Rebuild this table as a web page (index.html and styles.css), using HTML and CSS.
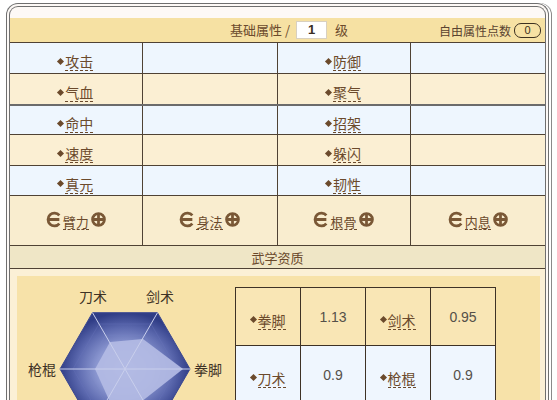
FILE: index.html
```html
<!DOCTYPE html>
<html>
<head>
<meta charset="utf-8">
<link rel="stylesheet" href="styles.css">
</head>
<body>
<div class="frame">
  <div class="topstrip"></div>
  <div class="head">
    <span class="head-title">基础属性 /</span>
    <span class="lvl">1</span>
    <span class="head-title">级</span>
    <span class="free">自由属性点数 <span class="pill">0</span></span>
  </div>
  <table class="attr">
    <colgroup><col class="c1"><col class="c2"><col class="c3"><col class="c4"></colgroup>
    <tr class="blue"><td><span class="lab"><i></i><u>攻击</u></span></td><td></td><td><span class="lab"><i></i><u>防御</u></span></td><td></td></tr>
    <tr class="cream"><td><span class="lab"><i></i><u>气血</u></span></td><td></td><td><span class="lab"><i></i><u>聚气</u></span></td><td></td></tr>
    <tr class="blue thick"><td><span class="lab"><i></i><u>命中</u></span></td><td></td><td><span class="lab"><i></i><u>招架</u></span></td><td></td></tr>
    <tr class="cream"><td><span class="lab"><i></i><u>速度</u></span></td><td></td><td><span class="lab"><i></i><u>躲闪</u></span></td><td></td></tr>
    <tr class="blue short"><td><span class="lab"><i></i><u>真元</u></span></td><td></td><td><span class="lab"><i></i><u>韧性</u></span></td><td></td></tr>
    <tr class="stat">
      <td><span class="ctl"><svg class="ic" viewBox="0 0 16 16"><path d="M13.5 4.2A6 6 0 1 0 13.5 11.8M2.4 8H13.5"/></svg><u>臂力</u><svg class="ic" viewBox="0 0 16 16"><circle cx="8" cy="8" r="5.6"/><path d="M2.4 8H13.6M8 2.4V13.6"/></svg></span></td>
      <td><span class="ctl"><svg class="ic" viewBox="0 0 16 16"><path d="M13.5 4.2A6 6 0 1 0 13.5 11.8M2.4 8H13.5"/></svg><u>身法</u><svg class="ic" viewBox="0 0 16 16"><circle cx="8" cy="8" r="5.6"/><path d="M2.4 8H13.6M8 2.4V13.6"/></svg></span></td>
      <td><span class="ctl"><svg class="ic" viewBox="0 0 16 16"><path d="M13.5 4.2A6 6 0 1 0 13.5 11.8M2.4 8H13.5"/></svg><u>根骨</u><svg class="ic" viewBox="0 0 16 16"><circle cx="8" cy="8" r="5.6"/><path d="M2.4 8H13.6M8 2.4V13.6"/></svg></span></td>
      <td><span class="ctl"><svg class="ic" viewBox="0 0 16 16"><path d="M13.5 4.2A6 6 0 1 0 13.5 11.8M2.4 8H13.5"/></svg><u>内息</u><svg class="ic" viewBox="0 0 16 16"><circle cx="8" cy="8" r="5.6"/><path d="M2.4 8H13.6M8 2.4V13.6"/></svg></span></td>
    </tr>
    <tr class="sub"><td colspan="4">武学资质</td></tr>
  </table>
  <div class="panel">
    <div class="panel-in">
      <svg class="radar" width="218" height="130" viewBox="0 0 218 130">
        <defs>
          <radialGradient id="rg" cx="50%" cy="50%" r="50%">
            <stop offset="0" stop-color="#aeb7e2"/>
            <stop offset="0.45" stop-color="#8995cf"/>
            <stop offset="0.75" stop-color="#5a67ad"/>
            <stop offset="1" stop-color="#303d86"/>
          </radialGradient>
        </defs>
        <polygon points="173,93 140.5,36.7 75.5,36.7 43,93 75.5,149.3 140.5,149.3" fill="url(#rg)" stroke="#3a4790" stroke-width="1"/>
        <polygon points="160,93 134,48 82,48 56,93 82,138 134,138" fill="none" stroke="#6774b8" stroke-width="0.6" opacity="0.6"/>
        <polygon points="147,93 127.5,59.2 88.5,59.2 69,93 88.5,126.8 127.5,126.8" fill="none" stroke="#7a86c4" stroke-width="0.6" opacity="0.5"/>
        <polygon points="166,93 126,63 93,66 78,93 92,124 124,126" fill="#b3bbe4" fill-opacity="0.92"/>
        <g stroke="#c9cfec" stroke-width="1">
          <line x1="108" y1="93" x2="173" y2="93"/>
          <line x1="108" y1="93" x2="43" y2="93"/>
          <line x1="108" y1="93" x2="140.5" y2="36.7"/>
          <line x1="108" y1="93" x2="75.5" y2="36.7"/>
          <line x1="108" y1="93" x2="75.5" y2="149.3"/>
          <line x1="108" y1="93" x2="140.5" y2="149.3"/>
        </g>
        <g class="rl">
          <text x="76" y="26" text-anchor="middle">刀术</text>
          <text x="143" y="26" text-anchor="middle">剑术</text>
          <text x="25" y="99" text-anchor="middle">枪棍</text>
          <text x="191" y="99" text-anchor="middle">拳脚</text>
        </g>
      </svg>
      <table class="apt">
        <tr class="ylw"><td><span class="lab"><i></i><u>拳脚</u></span></td><td class="num">1.13</td><td><span class="lab"><i></i><u>剑术</u></span></td><td class="num">0.95</td></tr>
        <tr class="blue"><td><span class="lab"><i></i><u>刀术</u></span></td><td class="num">0.9</td><td><span class="lab"><i></i><u>枪棍</u></span></td><td class="num">0.9</td></tr>
      </table>
    </div>
  </div>
</div>
</body>
</html>
```
FILE: styles.css
```css
html, body {
  margin: 0;
  padding: 0;
  background: #ffffff;
  overflow: hidden;
}
body {
  font-family: "Noto Sans CJK SC", "Liberation Sans", sans-serif;
  color: #6b4a2c;
}
.frame {
  margin: 3px 0 0 6px;
  border: 4px double #6f6f6f;
  border-bottom: none;
  border-radius: 12px 12px 0 0;
  background: #fdf9f6;
  width: 543px;
  height: 397px;
  box-sizing: border-box;
  overflow: hidden;
  box-shadow: 2px 0 0 #ffffff, 3px 0 0 #8a8a8a;
}
.topstrip {
  height: 11px;
}
.head {
  height: 24px;
  background: #f6e1a3;
  display: flex;
  align-items: center;
  padding-left: 220px;
  padding-right: 4px;
  border-bottom: 1px solid #4f4234;
  font-size: 13px;
  color: #6b4a2c;
}
.head-title {
  line-height: 18px;
}
.lvl {
  display: inline-block;
  width: 31px;
  height: 18px;
  margin: 0 8px 0 6px;
  background: #ffffff;
  border: 1px solid #d8d0c0;
  box-sizing: border-box;
  text-align: center;
  font-family: "Liberation Sans", sans-serif;
  font-weight: bold;
  font-size: 13px;
  line-height: 16px;
  color: #3a2e22;
}
.free {
  margin-left: auto;
  font-size: 12px;
  display: flex;
  align-items: center;
  gap: 3px;
  color: #5a4330;
}
.pill {
  display: inline-block;
  width: 27px;
  height: 15px;
  border: 1.5px solid #3c3020;
  border-radius: 7px;
  box-sizing: border-box;
  text-align: center;
  font-family: "Liberation Sans", sans-serif;
  font-size: 11px;
  line-height: 12px;
  color: #3c3020;
}
.attr {
  width: 535px;
  border-collapse: collapse;
  table-layout: fixed;
}
.c1 { width: 132px; }
.c2 { width: 135px; }
.c3 { width: 133px; }
.c4 { width: 135px; }
.attr td {
  border: 1px solid #4f4234;
  height: 30px;
  padding: 0;
  text-align: center;
  vertical-align: middle;
}
.attr tr:first-child td { border-top: none; }
.attr td:first-child { border-left: none; }
.attr td:last-child { border-right: none; }
.blue td { background: #eef6fe; }
.cream td { background: #fbefd3; }
.attr .thick td { border-top: 2px solid #6b6b6b; height: 28px; }
.attr .short td { height: 29px; }
.lab {
  font-size: 14px;
  color: #6b4a2c;
  display: inline-flex;
  align-items: center;
}
.lab i {
  display: inline-block;
  width: 5px;
  height: 5px;
  background: #6b4a2c;
  transform: rotate(45deg);
  margin: 0 2px 2px 0;
}
.lab u, .ctl u {
  text-decoration: none;
  border-bottom: 1px dashed #6b4a2c;
  line-height: 17px;
}
.attr .stat td {
  height: 49px;
  background: #f9edcf;
}
.ctl {
  display: inline-flex;
  align-items: center;
  font-size: 13px;
  color: #6b4a2c;
  gap: 1px;
}
.ctl u {
  margin-top: 6px;
  line-height: 15px;
}
.ic {
  width: 17px;
  height: 17px;
  fill: none;
  stroke: #7a5836;
  stroke-width: 2.6;
}
.attr .sub td {
  height: 22px;
  background: #efe6c6;
  font-size: 13px;
  color: #6b4a2c;
  border-bottom: 1px solid #4f4234;
}
.panel {
  background: #fbf0d6;
  padding: 7px 5px 0 7px;
}
.panel-in {
  background: #f7e2a9;
  display: flex;
  align-items: flex-start;
  height: 140px;
}
.radar {
  flex: none;
  display: block;
}
.rl text {
  font-family: "Noto Sans CJK SC", sans-serif;
  font-size: 14px;
  fill: #3e3226;
}
.apt {
  margin-top: 11px;
  border-collapse: collapse;
  table-layout: fixed;
  width: 260px;
}
.apt td {
  border: 1px solid #3e3226;
  width: 64px;
  height: 57px;
  text-align: center;
  vertical-align: middle;
  padding: 0;
}
.ylw td { background: #f9e6b5; }
.apt .blue td { background: #eff6fe; }
.num {
  font-family: "Liberation Sans", sans-serif;
  font-size: 14px;
  color: #555049;
}
```
